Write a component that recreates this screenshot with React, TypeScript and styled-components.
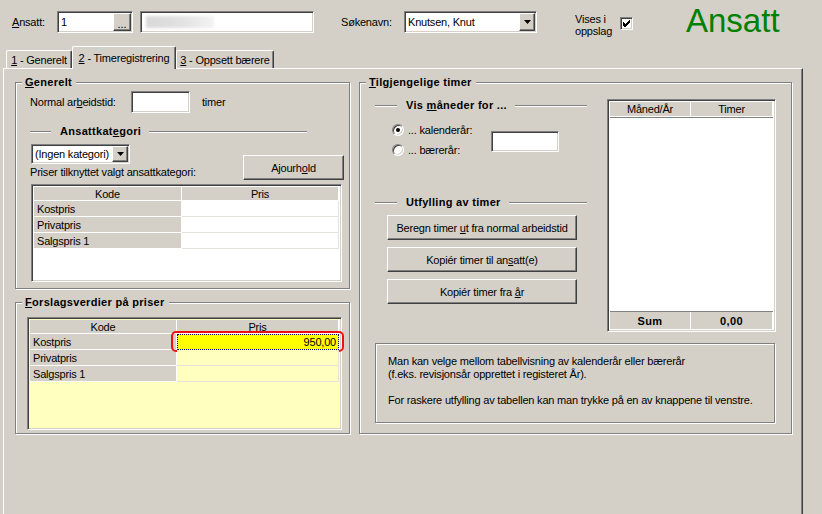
import React from "react";
import styled, { createGlobalStyle, css } from "styled-components";

const FACE = "#d4d0c8";
const SHADOW = "#808080";
const DARK = "#404040";
const LIGHT = "#ffffff";
const PALE = "#ffffc0";

const GlobalStyle = createGlobalStyle`
  html, body { margin: 0; padding: 0; background: ${FACE}; }
  body {
    font-family: "Liberation Sans", Arial, sans-serif;
    font-size: 11px;
    letter-spacing: -0.2px;
    color: #000;
  }
  *, *::before, *::after { box-sizing: border-box; }
  #root { width: 822px; height: 514px; overflow: hidden; }
  u { text-underline-offset: 1px; }
`;

const sunken = css`
  border: 1px solid;
  border-color: ${SHADOW} ${LIGHT} ${LIGHT} ${SHADOW};
  box-shadow: inset 1px 1px 0 ${DARK}, inset -1px -1px 0 ${FACE};
`;

const raised = css`
  border: 1px solid;
  border-color: ${LIGHT} ${DARK} ${DARK} ${LIGHT};
  box-shadow: inset -1px -1px 0 ${SHADOW};
  background: ${FACE};
`;

const etched = css`
  border: 1px solid ${SHADOW};
  box-shadow: inset 1px 1px 0 ${LIGHT}, 1px 1px 0 ${LIGHT};
`;

const Screen = styled.div`
  width: 822px;
  height: 514px;
  background: ${FACE};
  overflow: hidden;
`;

/* ---------- top bar ---------- */

const TopBar = styled.div`
  height: 44px;
  display: flex;
  align-items: flex-start;
  padding: 11px 0 0 12px;
`;

const FieldLabel = styled.div<{ $w: number; $ml?: number }>`
  width: ${(p) => p.$w}px;
  margin-left: ${(p) => p.$ml ?? 0}px;
  line-height: 22px;
  white-space: nowrap;
  flex: none;
`;

const TextBox = styled.div<{ $w: number; $h?: number; $ml?: number; $mt?: number }>`
  ${sunken};
  width: ${(p) => p.$w}px;
  height: ${(p) => p.$h ?? 22}px;
  margin-left: ${(p) => p.$ml ?? 0}px;
  margin-top: ${(p) => p.$mt ?? 0}px;
  background: #fff;
  display: flex;
  align-items: center;
  padding: 0 1px 0 3px;
  flex: none;
  white-space: nowrap;
  overflow: hidden;
`;

const BoxText = styled.span`
  flex: 1;
  overflow: hidden;
`;

const SmallButton = styled.div<{ $w: number; $h: number }>`
  ${raised};
  width: ${(p) => p.$w}px;
  height: ${(p) => p.$h}px;
  flex: none;
  display: flex;
  align-items: center;
  justify-content: center;
  line-height: 1;
`;

const Dots = styled.span`
  padding-top: 5px;
  letter-spacing: 0;
`;

const NameBlur = styled.span`
  display: block;
  width: 68px;
  height: 12px;
  margin-left: 2px;
  background: linear-gradient(to right, #d8d8d8, #e2e2e2 55%, #f3f3f3);
  filter: blur(1.5px);
`;

const VisesLabel = styled.div`
  margin-left: 38px;
  width: 45px;
  margin-top: 2px;
  line-height: 12px;
  flex: none;
`;

const CheckBox = styled.div`
  ${sunken};
  width: 13px;
  height: 13px;
  margin-top: 6px;
  background: #fff;
  display: flex;
  align-items: center;
  justify-content: center;
  flex: none;
`;

const BigTitle = styled.div`
  margin-left: 53px;
  margin-top: -7px;
  font-size: 33px;
  line-height: 33px;
  letter-spacing: 0;
  color: #008000;
  flex: none;
`;

/* ---------- tabs ---------- */

const TabStrip = styled.div`
  height: 24px;
  display: flex;
  align-items: flex-end;
  padding-left: 6px;
  position: relative;
  z-index: 1;
`;

const Tab = styled.div<{ $w: number; $active?: boolean }>`
  width: ${(p) => p.$w}px;
  height: ${(p) => (p.$active ? 23 : 18)}px;
  margin-bottom: ${(p) => (p.$active ? -1 : 0)}px;
  border-top: 1px solid ${LIGHT};
  border-left: 1px solid ${LIGHT};
  border-right: 1px solid ${DARK};
  box-shadow: inset -1px 0 0 ${SHADOW};
  border-radius: 2px 2px 0 0;
  background: ${FACE};
  text-align: center;
  line-height: 13px;
  padding-top: ${(p) => (p.$active ? 5 : 3)}px;
  white-space: nowrap;
  flex: none;
`;

const Panel = styled.div`
  margin-left: 3px;
  width: 800px;
  height: 446px;
  border-top: 1px solid ${LIGHT};
  border-left: 1px solid ${LIGHT};
  border-right: 1px solid ${DARK};
  box-shadow: inset -1px 0 0 ${SHADOW};
  display: flex;
  align-items: flex-start;
  gap: 9px;
  padding: 7px 0 0 11px;
`;

const LeftColumn = styled.div`
  width: 335px;
  display: flex;
  flex-direction: column;
  flex: none;
`;

/* ---------- group boxes ---------- */

const Group = styled.div<{ $w?: number; $h: number; $mt?: number }>`
  ${etched};
  width: ${(p) => (p.$w ? `${p.$w}px` : "auto")};
  height: ${(p) => p.$h}px;
  margin-top: ${(p) => p.$mt ?? 6}px;
  display: flex;
  flex-direction: column;
  flex: none;
`;

const GroupTitle = styled.div`
  margin: -7px 0 0 6px;
  padding: 0 4px 0 3px;
  width: fit-content;
  background: ${FACE};
  font-weight: bold;
  letter-spacing: 0.3px;
  line-height: 13px;
  white-space: nowrap;
`;

const Separator = styled.div<{ $w: number; $ml?: number; $mt?: number }>`
  width: ${(p) => p.$w}px;
  margin-left: ${(p) => p.$ml ?? 0}px;
  margin-top: ${(p) => p.$mt ?? 0}px;
  height: 13px;
  display: flex;
  align-items: center;
  flex: none;
`;

const SepLine = styled.span<{ $w?: number }>`
  display: block;
  height: 2px;
  border-top: 1px solid ${SHADOW};
  border-bottom: 1px solid ${LIGHT};
  ${(p) => (p.$w ? `width: ${p.$w}px; flex: none;` : "flex: 1;")}
`;

const SepText = styled.span`
  margin: 0 8px 0 9px;
  font-weight: bold;
  letter-spacing: 0.3px;
  line-height: 13px;
  white-space: nowrap;
`;

const FieldRow = styled.div<{ $mt: number; $pl: number }>`
  display: flex;
  align-items: center;
  margin-top: ${(p) => p.$mt}px;
  padding-left: ${(p) => p.$pl}px;
`;

const Hint = styled.span`
  margin-left: 12px;
`;

const CategoryRow = styled.div`
  display: flex;
  justify-content: space-between;
  align-items: flex-start;
  margin-top: 6px;
  padding: 0 5px 0 14px;
`;

const CategoryLeft = styled.div`
  display: flex;
  flex-direction: column;
`;

const Caption = styled.div`
  margin-top: 2px;
  line-height: 13px;
  white-space: nowrap;
`;

const PushButton = styled.div<{ $w: number; $h: number; $mt?: number }>`
  ${raised};
  width: ${(p) => p.$w}px;
  height: ${(p) => p.$h}px;
  margin-top: ${(p) => p.$mt ?? 0}px;
  display: flex;
  align-items: center;
  justify-content: center;
  white-space: nowrap;
  flex: none;
`;

/* ---------- grids ---------- */

const GridFrame = styled.div<{ $w: number; $h: number; $ml: number; $mt: number; $fill: string }>`
  ${sunken};
  width: ${(p) => p.$w}px;
  height: ${(p) => p.$h}px;
  margin-left: ${(p) => p.$ml}px;
  margin-top: ${(p) => p.$mt}px;
  background: ${(p) => p.$fill};
  padding: 2px;
  display: flex;
  flex-direction: column;
  flex: none;
`;

const GridRow = styled.div<{ $cols: string; $h: number }>`
  display: grid;
  grid-template-columns: ${(p) => p.$cols};
  height: ${(p) => p.$h}px;
  flex: none;
`;

const FixedCell = styled.div<{ $center?: boolean; $bold?: boolean }>`
  background: ${FACE};
  border-right: 1px solid ${LIGHT};
  border-bottom: 1px solid ${LIGHT};
  display: flex;
  align-items: center;
  justify-content: ${(p) => (p.$center ? "center" : "flex-start")};
  padding-left: ${(p) => (p.$center ? 0 : 3)}px;
  font-weight: ${(p) => (p.$bold ? "bold" : "normal")};
  letter-spacing: ${(p) => (p.$bold ? "0.4px" : "-0.2px")};
  white-space: nowrap;
  overflow: hidden;
`;

const TotalCell = styled(FixedCell)`
  border-bottom: none;
`;

const TotalRow = styled(GridRow)`
  border-top: 1px solid ${SHADOW};
`;

const HeadRow = styled(GridRow)`
  border-bottom: 1px solid ${SHADOW};
`;

const DataCell = styled.div<{ $bg: string; $focus?: boolean }>`
  position: relative;
  background: ${(p) => (p.$focus ? "#ffff00" : p.$bg)};
  border-right: 1px solid #e4e2da;
  border-bottom: 1px solid #e4e2da;
  display: flex;
  align-items: center;
  justify-content: flex-end;
  padding-right: 2px;
  ${(p) => (p.$focus ? `outline: 1px dotted #10105a; outline-offset: -1px;` : "")}
`;

const HighlightRing = styled.span`
  position: absolute;
  top: -3px;
  bottom: -3px;
  left: -6px;
  right: -6px;
  border: 2px solid #ee1111;
  border-radius: 5px;
  pointer-events: none;
`;

const GridBody = styled.div`
  flex: 1;
`;

/* ---------- right group ---------- */

const TimerBody = styled.div`
  padding: 0 15px;
  margin-top: 10px;
  display: flex;
  flex-direction: column;
`;

const TimerTop = styled.div`
  display: flex;
  align-items: flex-start;
`;

const TimerControls = styled.div`
  width: 232px;
  display: flex;
  flex-direction: column;
  flex: none;
`;

const PeriodRow = styled.div`
  display: flex;
  align-items: flex-start;
  margin-top: 8px;
  padding-left: 17px;
`;

const RadioList = styled.div`
  width: 99px;
  display: flex;
  flex-direction: column;
  flex: none;
`;

const RadioRow = styled.div`
  height: 20px;
  display: flex;
  align-items: center;
  gap: 4px;
  white-space: nowrap;
`;

const RadioDot = styled.span<{ $on?: boolean }>`
  width: 12px;
  height: 12px;
  border-radius: 50%;
  flex: none;
  border: 1px solid;
  border-color: ${SHADOW} ${LIGHT} ${LIGHT} ${SHADOW};
  box-shadow: inset 1px 1px 0 ${DARK}, inset -1px -1px 0 ${FACE};
  background: #fff;
  display: flex;
  align-items: center;
  justify-content: center;
  &::after {
    content: "";
    width: 4px;
    height: 4px;
    border-radius: 50%;
    background: ${(p) => (p.$on ? "#000" : "transparent")};
  }
`;

const ButtonStack = styled.div`
  display: flex;
  flex-direction: column;
  gap: 7px;
  margin: 6px 0 0 12px;
`;

const InfoBox = styled.div`
  ${etched};
  width: 400px;
  height: 80px;
  margin-top: 11px;
  padding: 11px 0 0 12px;
  line-height: 13px;
  white-space: nowrap;
`;

const InfoGap = styled.div`
  height: 13px;
`;

/* ---------- data ---------- */

const priceRows = ["Kostpris", "Privatpris", "Salgspris 1"];

function DropArrow() {
  return (
    <svg width="7" height="4" viewBox="0 0 7 4">
      <polygon points="0,0 7,0 3.5,4" fill="#000" />
    </svg>
  );
}

function CheckMark() {
  return (
    <svg width="7" height="7" viewBox="0 0 7 7" shapeRendering="crispEdges">
      <polygon points="0,2 2,4 6,0 7,0 7,3 2,7 1,7 0,5" fill="#000" />
    </svg>
  );
}

export default function App() {
  return (
    <>
      <GlobalStyle />
      <Screen>
        <TopBar>
          <FieldLabel $w={45}>
            <u>A</u>nsatt:
          </FieldLabel>
          <TextBox $w={76}>
            <BoxText>1</BoxText>
            <SmallButton $w={18} $h={18}>
              <Dots>...</Dots>
            </SmallButton>
          </TextBox>
          <TextBox $w={174} $ml={7}>
            <NameBlur />
          </TextBox>
          <FieldLabel $w={63} $ml={27}>
            Søkenavn:
          </FieldLabel>
          <TextBox $w={133}>
            <BoxText>Knutsen, Knut</BoxText>
            <SmallButton $w={16} $h={18}>
              <DropArrow />
            </SmallButton>
          </TextBox>
          <VisesLabel>
            Vises i
            <br />
            oppslag
          </VisesLabel>
          <CheckBox>
            <CheckMark />
          </CheckBox>
          <BigTitle>Ansatt</BigTitle>
        </TopBar>

        <TabStrip>
          <Tab $w={66}>
            <u>1</u> - Generelt
          </Tab>
          <Tab $w={104} $active>
            <u>2</u> - Timeregistrering
          </Tab>
          <Tab $w={98}>
            <u>3</u> - Oppsett bærere
          </Tab>
        </TabStrip>

        <Panel>
          <LeftColumn>
            <Group $h={207}>
              <GroupTitle>
                <u>G</u>enerelt
              </GroupTitle>
              <FieldRow $mt={2} $pl={14}>
                <FieldLabel $w={101}>
                  Normal ar<u>b</u>eidstid:
                </FieldLabel>
                <TextBox $w={59} />
                <Hint>timer</Hint>
              </FieldRow>
              <Separator $w={277} $ml={14} $mt={12}>
                <SepLine $w={21} />
                <SepText>
                  Ansattkat<u>e</u>gori
                </SepText>
                <SepLine />
              </Separator>
              <CategoryRow>
                <CategoryLeft>
                  <TextBox $w={99} $h={20} $ml={1}>
                    <BoxText>(Ingen kategori)</BoxText>
                    <SmallButton $w={16} $h={16}>
                      <DropArrow />
                    </SmallButton>
                  </TextBox>
                  <Caption>Priser tilknyttet valgt ansattkategori:</Caption>
                </CategoryLeft>
                <PushButton $w={101} $h={25} $mt={11}>
                  Ajourh<u>o</u>ld
                </PushButton>
              </CategoryRow>
              <GridFrame $w={311} $h={98} $ml={15} $mt={4} $fill="#fff">
                <GridRow $cols="148px 1fr" $h={14}>
                  <FixedCell $center>Kode</FixedCell>
                  <FixedCell $center>Pris</FixedCell>
                </GridRow>
                {priceRows.map((r) => (
                  <GridRow key={r} $cols="148px 1fr" $h={16}>
                    <FixedCell>{r}</FixedCell>
                    <DataCell $bg="#fff" />
                  </GridRow>
                ))}
                <GridBody />
              </GridFrame>
            </Group>

            <Group $h={132} $mt={13}>
              <GroupTitle>
                <u>F</u>orslagsverdier på priser
              </GroupTitle>
              <GridFrame $w={315} $h={113} $ml={11} $mt={8} $fill={PALE}>
                <GridRow $cols="147px 1fr" $h={14}>
                  <FixedCell $center>Kode</FixedCell>
                  <FixedCell $center>Pris</FixedCell>
                </GridRow>
                {priceRows.map((r, i) => (
                  <GridRow key={r} $cols="147px 1fr" $h={16}>
                    <FixedCell>{r}</FixedCell>
                    {i === 0 ? (
                      <DataCell $bg={PALE} $focus>
                        950,00
                        <HighlightRing />
                      </DataCell>
                    ) : (
                      <DataCell $bg={PALE} />
                    )}
                  </GridRow>
                ))}
                <GridBody />
              </GridFrame>
            </Group>
          </LeftColumn>

          <Group $w={433} $h={352}>
            <GroupTitle>
              <u>T</u>ilgjengelige timer
            </GroupTitle>
            <TimerBody>
              <TimerTop>
                <TimerControls>
                  <Separator $w={212}>
                    <SepLine $w={22} />
                    <SepText>
                      Vis <u>m</u>åneder for ...
                    </SepText>
                    <SepLine />
                  </Separator>
                  <PeriodRow>
                    <RadioList>
                      <RadioRow>
                        <RadioDot $on />
                        <span>... kalenderår:</span>
                      </RadioRow>
                      <RadioRow>
                        <RadioDot />
                        <span>... bærerår:</span>
                      </RadioRow>
                    </RadioList>
                    <TextBox $w={68} $h={21} $mt={11} />
                  </PeriodRow>
                  <Separator $w={212} $mt={36}>
                    <SepLine $w={22} />
                    <SepText>Utfylling av timer</SepText>
                    <SepLine />
                  </Separator>
                  <ButtonStack>
                    <PushButton $w={190} $h={25}>
                      Beregn timer&nbsp;<u>u</u>t fra normal arbeidstid
                    </PushButton>
                    <PushButton $w={190} $h={25}>
                      Kopiér timer til an<u>s</u>att(e)
                    </PushButton>
                    <PushButton $w={190} $h={25}>
                      Kopiér timer fra&nbsp;<u>å</u>r
                    </PushButton>
                  </ButtonStack>
                </TimerControls>
                <GridFrame $w={169} $h={233} $ml={0} $mt={0} $fill="#fff">
                  <HeadRow $cols="81px 1fr" $h={16}>
                    <FixedCell $center>Måned/År</FixedCell>
                    <FixedCell $center>Timer</FixedCell>
                  </HeadRow>
                  <GridBody />
                  <TotalRow $cols="81px 1fr" $h={18}>
                    <TotalCell $center $bold>
                      Sum
                    </TotalCell>
                    <TotalCell $center $bold>
                      0,00
                    </TotalCell>
                  </TotalRow>
                </GridFrame>
              </TimerTop>
              <InfoBox>
                <div>Man kan velge mellom tabellvisning av kalenderår eller bærerår</div>
                <div>(f.eks. revisjonsår opprettet i registeret År).</div>
                <InfoGap />
                <div>For raskere utfylling av tabellen kan man trykke på en av knappene til venstre.</div>
              </InfoBox>
            </TimerBody>
          </Group>
        </Panel>
      </Screen>
    </>
  );
}
